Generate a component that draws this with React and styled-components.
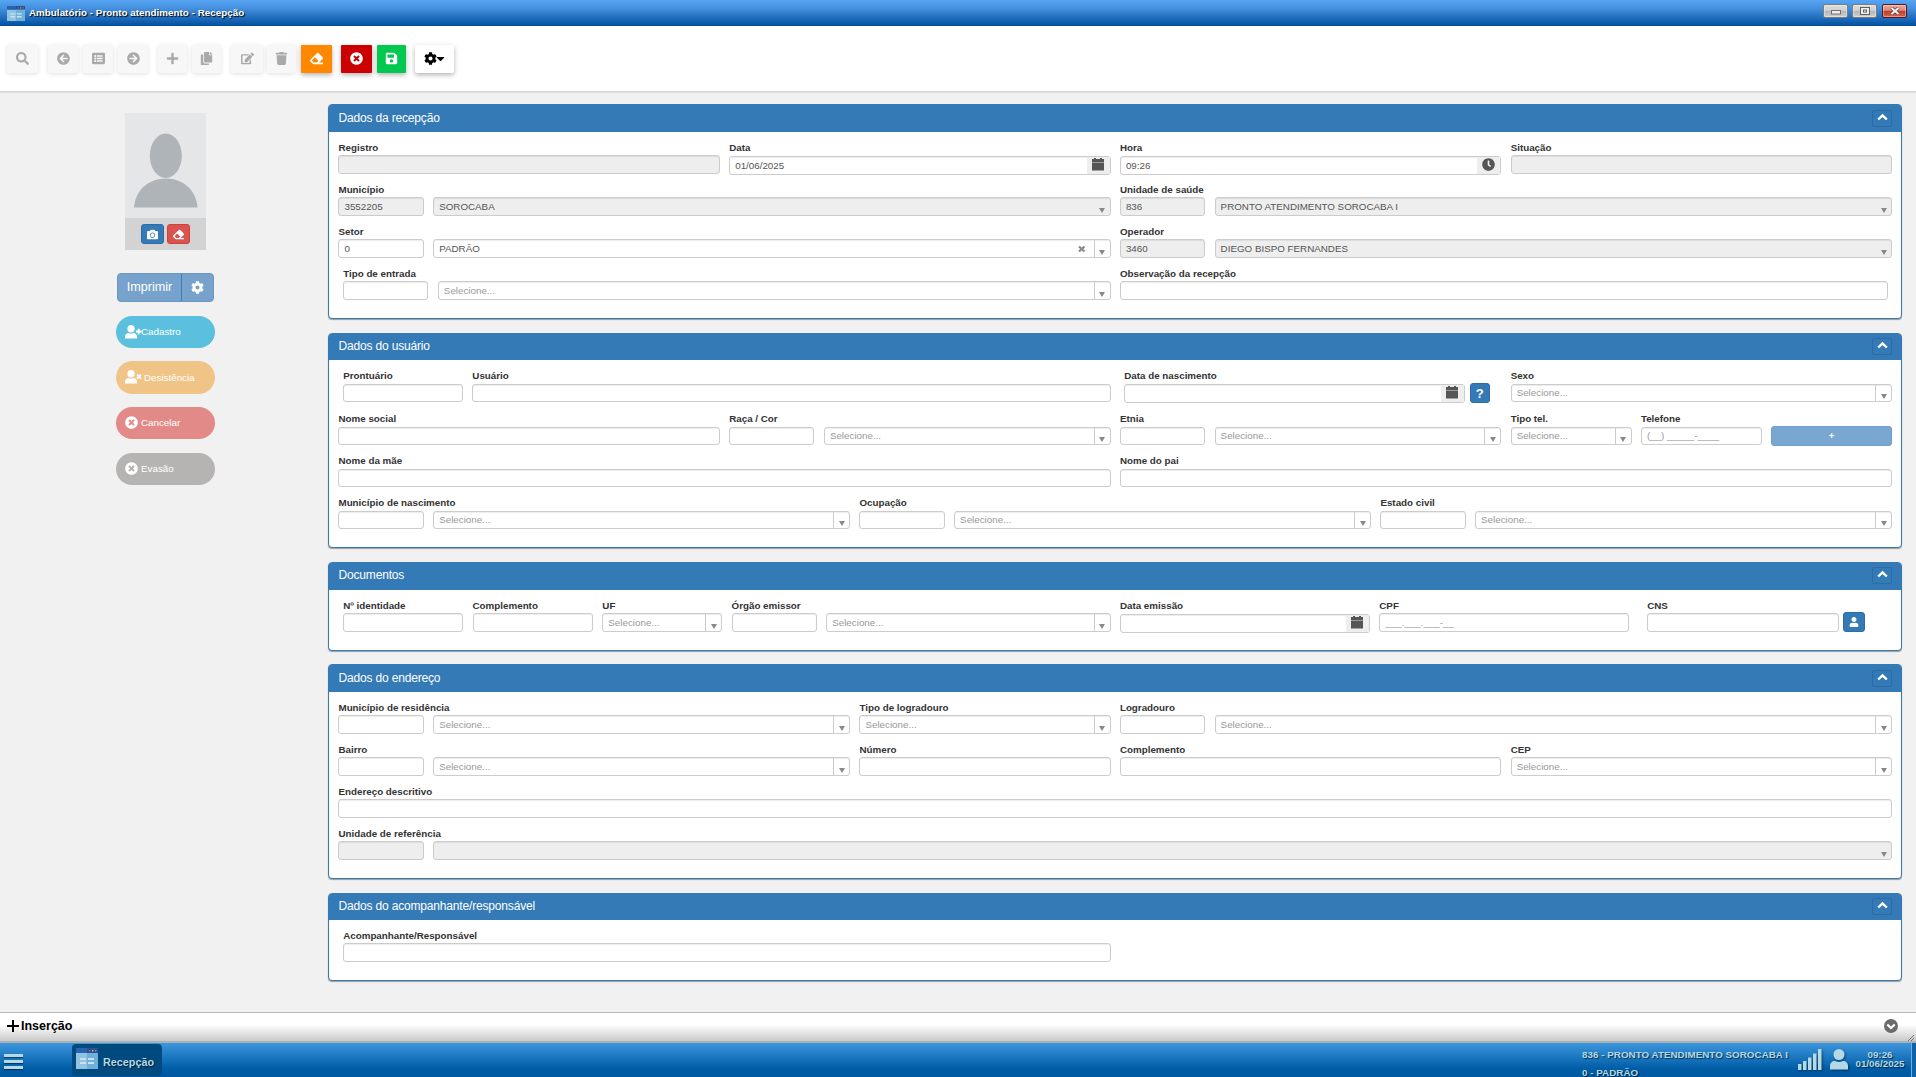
import React from 'react';
import styled, { createGlobalStyle, css } from 'styled-components';
import {
  FaArrowCircleLeft,
  FaArrowCircleRight,
  FaCamera,
  FaCaretDown,
  FaClock,
  FaCog,
  FaCopy,
  FaEdit,
  FaEraser,
  FaListAlt,
  FaPlus,
  FaSave,
  FaSearch,
  FaTimesCircle,
  FaTrash,
  FaUser,
} from 'react-icons/fa';

const GlobalStyle = createGlobalStyle`
  * {
    box-sizing: border-box;
  }

  body {
    margin: 0;
    overflow: hidden;
    font-family: 'Liberation Sans', Arial, sans-serif;
    font-size: 9.8px;
    color: #333333;
  }

  svg {
    display: block;
  }
`;

const Screen = styled.div`
  display: flex;
  flex-direction: column;
  width: 1916px;
  height: 1077px;
  background: #f1f1f1;
`;

/* window title */

const TitleBar = styled.header`
  display: flex;
  align-items: center;
  height: 26px;
  flex: none;
  padding: 0 9px 0 7px;
  background: linear-gradient(#57a5f3, #428ddc 35%, #004f9f);
`;

const WindowTitle = styled.h1`
  flex: 1;
  margin: -1px 0 0 4px;
  font-size: 9.8px;
  line-height: 26px;
  letter-spacing: 0.03px;
  color: #ffffff;
  text-shadow: 1px 1px 1px #000000;
`;

const WindowButton = styled.span`
  display: flex;
  align-items: center;
  justify-content: center;
  width: 25px;
  height: 14px;
  margin: -4px 0 0 4px;
  border: 1px solid ${({ $close }) => ($close ? '#5b1420' : '#7c7c7c')};
  border-radius: 2px;
  background: ${({ $close }) =>
    $close
      ? 'linear-gradient(#eba798, #dd8a78 45%, #b8402a 50%, #d4674f)'
      : 'linear-gradient(#dcdcdc, #d0d0d0 45%, #b6b6b6 50%, #cecece)'};
  box-shadow: inset 0 0 0 1px rgba(255, 255, 255, 0.35);

  &:last-child {
    margin-left: 5px;
  }
`;

/* toolbar */

const Toolbar = styled.nav`
  display: flex;
  height: 66px;
  flex: none;
  padding: 19px 7px;
  background: #ffffff;
  border-bottom: 1px solid #d4d4d4;
  box-shadow: 0 1px 1px rgba(0, 0, 0, 0.06);
`;

const toolColors = {
  off: ['#f7f7f7', '#a9a9a9'],
  orange: ['#ff8800', '#ffffff'],
  red: ['#cc0000', '#ffffff'],
  green: ['#00c851', '#ffffff'],
  light: ['#ffffff', '#000000'],
};

const ToolButton = styled.button`
  display: flex;
  align-items: center;
  justify-content: center;
  width: ${({ $w }) => $w}px;
  height: 28px;
  margin: 0 0 0 ${({ $gap }) => $gap || 0}px;
  padding: 0 0 2px;
  border: 0;
  border-radius: ${({ $tone }) => ($tone === 'off' || $tone === 'light' ? 2 : 1)}px;
  background: ${({ $tone }) => toolColors[$tone][0]};
  color: ${({ $tone }) => toolColors[$tone][1]};
  font-size: 13px;
  box-shadow: ${({ $tone }) =>
    $tone === 'off'
      ? '0 1px 4px rgba(0, 0, 0, 0.13)'
      : '0 2px 5px rgba(0, 0, 0, 0.3)'};
`;

const Caret = styled(FaCaretDown)`
  width: 9px;
  height: 13px;
  margin-left: -1px;
`;

/* side column */

const Main = styled.main`
  display: flex;
  flex: 1;
  min-height: 0;
`;

const Side = styled.aside`
  display: flex;
  flex-direction: column;
  align-items: center;
  width: 328px;
  padding: 21px 113px 0 116px;
`;

const Photo = styled.div`
  width: 81px;
  height: 137px;
  flex: none;
  margin-bottom: 23px;
  background: #e4e6e8;
`;

const PhotoActions = styled.div`
  display: flex;
  justify-content: center;
  gap: 3px;
  height: 32px;
  padding-top: 6px;
  background: #d3d3d3;
`;

const SmallButton = styled.button`
  display: flex;
  align-items: center;
  justify-content: center;
  flex: none;
  width: ${({ $w }) => $w || 23}px;
  height: 20px;
  margin: ${({ $raised }) => ($raised ? -1 : 0)}px 0 0;
  padding: 0;
  border: 1px solid ${({ $danger }) => ($danger ? '#d43f3a' : '#2e6da4')};
  border-radius: 3px;
  background: ${({ $danger }) => ($danger ? '#d9534f' : '#337ab7')};
  color: #ffffff;
  font-size: ${({ $font }) => $font || 11}px;
  font-weight: bold;
`;

const PrintGroup = styled.div`
  display: flex;
  width: 97px;
  height: 29px;
  flex: none;
  margin-bottom: 14px;
  border: 1px solid #6b97c3;
  border-radius: 4px;
  background: #76a2cc;
  color: #ffffff;
  font-size: 12.6px;
  line-height: 26px;
`;

const PrintLabel = styled.span`
  width: 64px;
  text-align: center;
  border-right: 1px solid #3f7ab2;
`;

const PrintConfig = styled.span`
  display: flex;
  flex: 1;
  align-items: center;
  justify-content: center;
`;

const Pill = styled.button`
  display: flex;
  align-items: center;
  gap: ${({ $gap }) => $gap}px;
  width: 99px;
  height: ${({ $h }) => $h || 32}px;
  flex: none;
  margin: 0 0 ${({ $after }) => $after || 14}px;
  padding: 0 0 1px 9px;
  border: 0;
  border-radius: 17px;
  background: ${({ $color }) => $color};
  color: #ffffff;
  font: 9.8px 'Liberation Sans', Arial, sans-serif;
`;

const PillIcon = styled.span`
  width: ${({ $w }) => $w}px;
  flex: none;
`;

/* panels */

const Content = styled.section`
  display: flex;
  flex-direction: column;
  width: 1574px;
  padding-top: 12px;
`;

const PanelBox = styled.section`
  flex: none;
  height: ${({ $height }) => $height}px;
  margin-bottom: ${({ $after }) => $after || 14}px;
  border: 1px solid #337ab7;
  border-radius: 4px;
  background: #ffffff;
  box-shadow: 0 1px 1px rgba(0, 0, 0, 0.35);
`;

const PanelHeader = styled.header`
  display: flex;
  justify-content: space-between;
  height: ${({ $short }) => ($short ? 26 : 27)}px;
  padding: 0 9px 0 9.5px;
  border-radius: 2px 2px 0 0;
  background: #337ab7;
  color: #ffffff;
`;

const PanelTitle = styled.h2`
  margin: 0;
  font-size: 12px;
  font-weight: normal;
  line-height: ${({ $low }) => ($low ? 26 : 24)}px;
  letter-spacing: -0.17px;
`;

const CollapseButton = styled.button`
  display: flex;
  justify-content: center;
  width: 20px;
  height: 17px;
  margin-top: ${({ $low }) => ($low ? 5 : 4)}px;
  padding: 2px 0 0;
  border: 1px solid #2e6da4;
  border-radius: 2px;
  background: transparent;
`;

const PanelBody = styled.div`
  --field: ${({ $dense }) => ($dense ? 18 : 19)}px;
  --label-line: ${({ $dense }) => ($dense ? 12 : 14)}px;
  padding: ${({ $dense }) => ($dense ? 10 : 9)}px 8.97px 0 9.48px;
`;

const Row = styled.div`
  display: grid;
  grid-template-columns: repeat(12, minmax(0, 1fr));
  column-gap: 9.33px;
  height: ${({ $height }) => $height || 42}px;
`;

const Cell = styled.div`
  display: flex;
  gap: 9.4px;
  grid-column: span ${({ $span }) => $span};
  padding: 0 ${({ $end }) => $end || 0}px 0 ${({ $start }) => $start || 0}px;
`;

const FieldBox = styled.div`
  min-width: 0;
  ${({ $w }) =>
    $w
      ? css`
          flex: 0 0 ${$w}px;
        `
      : css`
          flex: 1;
        `}
`;

const Label = styled.label`
  display: block;
  height: 14px;
  font-weight: bold;
  line-height: var(--label-line);
  white-space: nowrap;
`;

const Line = styled.div`
  display: flex;
  gap: ${({ $gap }) => $gap || 9.4}px;
`;

const Box = styled.div`
  display: flex;
  align-items: center;
  height: var(--field);
  min-width: 0;
  padding-left: 5px;
  border: 1px solid #cccccc;
  border-radius: 3px;
  background: ${({ $off }) => ($off ? '#eeeeee' : '#ffffff')};
  box-shadow: inset 0 1px 1px rgba(0, 0, 0, 0.075);
  color: ${({ $muted }) => ($muted ? '#999999' : '#555555')};
  white-space: nowrap;
  ${({ $w }) =>
    $w
      ? css`
          flex: 0 0 ${$w}px;
        `
      : css`
          flex: 1;
        `}
`;

const DateBox = styled(Box)`
  height: 19px;
  margin-top: ${({ $flush }) => ($flush ? 0 : 1)}px;
`;

const Value = styled.span`
  flex: 1;
  line-height: 16px;
`;

const Arrow = styled.span`
  display: flex;
  align-items: flex-end;
  justify-content: center;
  align-self: stretch;
  width: 16px;
  padding-bottom: 2px;
  border-left: 1px solid ${({ $off }) => ($off ? 'transparent' : '#cccccc')};
`;

const AddOn = styled.span`
  display: flex;
  align-items: flex-start;
  justify-content: center;
  align-self: stretch;
  width: 23px;
  padding-top: 1px;
  background: #eeeeee;
  color: #555555;
`;

const Clear = styled.span`
  width: 16px;
`;

const AddPhone = styled.button`
  flex: 1;
  height: 20px;
  margin-top: 13px;
  padding: 0 0 2px;
  border: 1px solid #6f9fcb;
  border-radius: 3px;
  background: #7aa7d1;
  color: #ffffff;
  font: bold 9.8px 'Liberation Sans', Arial, sans-serif;
`;

/* bottom bars */

const StatusBar = styled.footer`
  display: flex;
  align-items: center;
  height: 31px;
  flex: none;
  padding: 0 0 2px 7px;
  border-top: 1px solid #b5b5b5;
  border-bottom: 2px solid #a9b3b5;
  background: linear-gradient(#ffffff 42%, #c9c9c9);
  color: #000000;
  font-size: 12.5px;
  font-weight: bold;
`;

const StatusText = styled.span`
  flex: 1;
  margin-left: 2px;
`;

const Grip = styled.span`
  align-self: flex-end;
  margin: 0 2px -2px 10px;
`;

const TaskBar = styled.footer`
  display: flex;
  height: 34px;
  flex: none;
  padding-left: 4px;
  background: linear-gradient(#3d97de, #005da6 75%, #0058a2);
  color: #b4d9e6;
  font-weight: bold;
  text-shadow: 1px 1px 1px rgba(0, 0, 0, 0.6);
`;

const MenuLines = styled.span`
  display: flex;
  flex-direction: column;
  gap: 3px;
  width: 19px;
  margin: 11px 49px 0 0;

  i {
    height: 3px;
    background: #b4d9e6;
    box-shadow: 0 1px 1px rgba(0, 0, 0, 0.5);
  }
`;

const TaskButton = styled.div`
  display: flex;
  gap: 5px;
  width: 90px;
  height: 32px;
  margin-top: 1px;
  padding: 4px 0 0 4px;
  border-radius: 4px;
  background: #004a80;
  font-size: 10.8px;
  line-height: 28px;
`;

const UnitInfo = styled.div`
  width: 216px;
  margin-left: auto;
  padding-top: 3px;
  overflow: hidden;
  line-height: 17.6px;
  letter-spacing: 0.03px;
  white-space: nowrap;
`;

const TrayIcon = styled.span`
  width: ${({ $w }) => $w}px;
  padding-top: 6px;
  filter: drop-shadow(1px 1px 1px rgba(0, 0, 0, 0.4));
`;

const Clock = styled.div`
  width: 63px;
  padding: 7px 0 0 1px;
  text-align: center;
  line-height: 9px;
`;

const DesktopEdge = styled.div`
  width: 5px;
  border-left: 1px solid #6eb0e4;
  background: #0e62a8;
`;

const FormIcon = ({ size, height }) => (
  <svg width={size} height={height} viewBox="0 0 22 21" preserveAspectRatio="none">
    <rect width="22" height="21" fill="#6fb0d8" />
    <rect width="11" height="21" fill="#8fc3e0" />
    <rect width="22" height="5" fill="#2a4f96" />
    <rect width="11" height="5" fill="#2763ae" />
    <rect x="13" y="2" width="1.4" height="1.4" fill="#e0574f" />
    <rect x="16" y="2" width="1.4" height="1.4" fill="#e5c04a" />
    <rect x="19" y="2" width="1.4" height="1.4" fill="#5fae6a" />
    <path d="M4 11h6M4 15h6M12 11h6M12 15h6" stroke="#c5e3f3" strokeWidth="2" />
  </svg>
);

const CalendarIcon = () => (
  <svg width="12" height="13" viewBox="0 0 12 13">
    <path d="M2 0h2v2H2zM8 0h2v2H8zM0 1h12v3H0z" fill="#555555" />
    <path d="M0 4h12v1H0z" fill="#999999" />
    <path d="M0 5h12v7.500H0z" fill="#555555" />
  </svg>
);

const Triangle = () => (
  <svg width="6" height="5" viewBox="0 0 6 5">
    <path d="M0 0h6L3 5z" fill="#888888" />
  </svg>
);

const UserMark = ({ cross }) => (
  <svg width="18" height="14" viewBox="0 0 18 14" fill="#ffffff">
    <ellipse cx="6" cy="3.8" rx="3.6" ry="3.8" />
    <path d="M0 13.5v-2.2c0-1.8 1.5-3 3-3.4 2 .9 4 .9 6 0 1.5.4 3 1.6 3 3.4v2.2z" />
    {cross ? (
      <path d="M12 4.600l4 4M16 4.600l-4 4" stroke="#ffffff" strokeWidth="2" />
    ) : (
      <path d="M11 6.500h5.500M13.700 3.700v5.500" stroke="#ffffff" strokeWidth="1.800" />
    )}
  </svg>
);

const Input = ({ w, value, off, muted }) => (
  <Box $w={w} $off={off} $muted={muted}>
    <Value>{value}</Value>
  </Box>
);

const Select = ({ value = 'Selecione...', off, picked, clear }) => (
  <Box $off={off} $muted={!picked}>
    <Value>{value}</Value>
    {clear && (
      <Clear>
        <svg width="8" height="8" viewBox="0 0 8 8">
          <path d="M1 1.500l5.500 5M6.500 1.500L1 6.500" stroke="#888888" strokeWidth="2.200" />
        </svg>
      </Clear>
    )}
    <Arrow $off={off}>
      <Triangle />
    </Arrow>
  </Box>
);

const DateInput = ({ value, icon, flush }) => (
  <DateBox $flush={flush}>
    <Value>{value}</Value>
    <AddOn>{icon || <CalendarIcon />}</AddOn>
  </DateBox>
);

const Field = ({ label, w, gap, children }) => (
  <FieldBox $w={w}>
    <Label>{label}</Label>
    <Line $gap={gap}>{children}</Line>
  </FieldBox>
);

// short code input followed by its description select
const Coded = ({ label, code, ...select }) => (
  <Field label={label}>
    <Input w={85.3} value={code} off={select.off} />
    <Select {...select} />
  </Field>
);

const Panel = ({ title, height, after, dense, short, low, children }) => (
  <PanelBox $height={height} $after={after}>
    <PanelHeader $short={short}>
      <PanelTitle $low={low}>{title}</PanelTitle>
      <CollapseButton $low={low}>
        <svg width="11" height="8" viewBox="0 0 11 8">
          <path d="M1.200 6.500L5.500 2.400l4.300 4.100" fill="none" stroke="#ffffff" strokeWidth="2.400" />
        </svg>
      </CollapseButton>
    </PanelHeader>
    <PanelBody $dense={dense}>{children}</PanelBody>
  </PanelBox>
);

const tools = [
  { icon: <FaSearch />, w: 31 },
  { icon: <FaArrowCircleLeft />, w: 30, gap: 10 },
  { icon: <FaListAlt />, w: 30, gap: 5 },
  { icon: <FaArrowCircleRight />, w: 30, gap: 5 },
  { icon: <FaPlus />, w: 29, gap: 10 },
  { icon: <FaCopy />, w: 29, gap: 5 },
  { icon: <FaEdit />, w: 32, gap: 10 },
  { icon: <FaTrash />, w: 29, gap: 4 },
  { icon: <FaEraser />, w: 31, gap: 5, tone: 'orange' },
  { icon: <FaTimesCircle />, w: 31, gap: 9, tone: 'red' },
  { icon: <FaSave />, w: 29, gap: 5, tone: 'green' },
];

const App = () => {
  return (
    <Screen>
      <GlobalStyle />
      <TitleBar>
        <FormIcon size={18} height={15} />
        <WindowTitle>Ambulatório - Pronto atendimento - Recepção</WindowTitle>
        <WindowButton>
          <svg width="10" height="8" viewBox="0 0 10 8">
            <rect x=".5" y="3.5" width="9" height="3.5" fill="#eeeeee" stroke="#707070" />
          </svg>
        </WindowButton>
        <WindowButton>
          <svg width="10" height="8" viewBox="0 0 10 8">
            <rect x=".5" y=".5" width="9" height="7" fill="#eeeeee" stroke="#606060" />
            <rect x="3.5" y="3" width="3" height="2" fill="#ffffff" stroke="#606060" />
          </svg>
        </WindowButton>
        <WindowButton $close>
          <svg width="10" height="8" viewBox="0 0 10 8">
            <path d="M1.5 1l7 6M8.5 1l-7 6" stroke="#70424a" strokeWidth="3.6" />
            <path d="M1.5 1l7 6M8.5 1l-7 6" stroke="#f2f2f2" strokeWidth="2" />
          </svg>
        </WindowButton>
      </TitleBar>

      <Toolbar>
        {tools.map(({ icon, w, gap, tone = 'off' }, i) => (
          <ToolButton key={i} $w={w} $gap={gap} $tone={tone}>
            {icon}
          </ToolButton>
        ))}
        <ToolButton $w={39} $gap={9} $tone="light">
          <FaCog />
          <Caret />
        </ToolButton>
      </Toolbar>

      <Main>
        <Side>
          <Photo>
            <svg width="81" height="105" viewBox="0 0 81 105" fill="#afb4b8">
              <ellipse cx="40.8" cy="42.7" rx="16" ry="22.2" />
              <path d="M9 94.500C10 78 23 65.500 40.800 65.500S71.500 78 72.500 94.500z" />
            </svg>
            <PhotoActions>
              <SmallButton>
                <FaCamera />
              </SmallButton>
              <SmallButton $danger>
                <FaEraser />
              </SmallButton>
            </PhotoActions>
          </Photo>
          <PrintGroup>
            <PrintLabel>Imprimir</PrintLabel>
            <PrintConfig>
              <FaCog size={13} />
            </PrintConfig>
          </PrintGroup>
          <Pill $color="#5bc0de" $gap={0} $after={13}>
            <PillIcon $w={16}>
              <UserMark />
            </PillIcon>
            Cadastro
          </Pill>
          <Pill $color="#f0c486" $gap={2} $h={33} $after={13}>
            <PillIcon $w={17}>
              <UserMark cross />
            </PillIcon>
            Desistência
          </Pill>
          <Pill $color="#e28a87" $gap={3}>
            <FaTimesCircle size={13} />
            Cancelar
          </Pill>
          <Pill $color="#b5b4b3" $gap={3}>
            <FaTimesCircle size={13} />
            Evasão
          </Pill>
        </Side>

        <Content>
          <Panel title="Dados da recepção" height={215} low>
            <Row>
              <Cell $span={3}>
                <Field label="Registro">
                  <Input off />
                </Field>
              </Cell>
              <Cell $span={3}>
                <Field label="Data">
                  <DateInput value="01/06/2025" />
                </Field>
              </Cell>
              <Cell $span={3}>
                <Field label="Hora">
                  <DateInput value="09:26" icon={<FaClock size={13} />} />
                </Field>
              </Cell>
              <Cell $span={3}>
                <Field label="Situação">
                  <Input off />
                </Field>
              </Cell>
            </Row>
            <Row>
              <Cell $span={6}>
                <Coded label="Município" code="3552205" value="SOROCABA" picked off />
              </Cell>
              <Cell $span={6}>
                <Coded
                  label="Unidade de saúde"
                  code="836"
                  value="PRONTO ATENDIMENTO SOROCABA I"
                  picked
                  off
                />
              </Cell>
            </Row>
            <Row>
              <Cell $span={6}>
                <Coded label="Setor" code="0" value="PADRÃO" picked clear />
              </Cell>
              <Cell $span={6}>
                <Coded label="Operador" code="3460" value="DIEGO BISPO FERNANDES" picked off />
              </Cell>
            </Row>
            <Row>
              <Cell $span={6} $start={4.7}>
                <Coded label="Tipo de entrada" />
              </Cell>
              <Cell $span={6} $end={4}>
                <Field label="Observação da recepção">
                  <Input />
                </Field>
              </Cell>
            </Row>
          </Panel>

          <Panel title="Dados do usuário" height={215} dense short>
            <Row $height={43}>
              <Cell $span={6} $start={4.7}>
                <Field label="Prontuário" w={119.8}>
                  <Input />
                </Field>
                <Field label="Usuário">
                  <Input />
                </Field>
              </Cell>
              <Cell $span={3} $start={4.3} $end={11.5}>
                <Field label="Data de nascimento" gap={5}>
                  <DateInput flush />
                  <SmallButton $w={20} $font={13} $raised>
                    ?
                  </SmallButton>
                </Field>
              </Cell>
              <Cell $span={3}>
                <Field label="Sexo">
                  <Select />
                </Field>
              </Cell>
            </Row>
            <Row>
              <Cell $span={3}>
                <Field label="Nome social">
                  <Input />
                </Field>
              </Cell>
              <Cell $span={3}>
                <Coded label="Raça / Cor" />
              </Cell>
              <Cell $span={3}>
                <Coded label="Etnia" />
              </Cell>
              <Cell $span={1}>
                <Field label="Tipo tel.">
                  <Select />
                </Field>
              </Cell>
              <Cell $span={1}>
                <Field label="Telefone">
                  <Input value="(__) _____-____" muted />
                </Field>
              </Cell>
              <Cell $span={1}>
                <AddPhone>+</AddPhone>
              </Cell>
            </Row>
            <Row>
              <Cell $span={6}>
                <Field label="Nome da mãe">
                  <Input />
                </Field>
              </Cell>
              <Cell $span={6}>
                <Field label="Nome do pai">
                  <Input />
                </Field>
              </Cell>
            </Row>
            <Row>
              <Cell $span={4}>
                <Coded label="Município de nascimento" />
              </Cell>
              <Cell $span={4}>
                <Coded label="Ocupação" />
              </Cell>
              <Cell $span={4}>
                <Coded label="Estado civil" />
              </Cell>
            </Row>
          </Panel>

          <Panel title="Documentos" height={89} after={13}>
            <Row>
              <Cell $span={6} $start={4.7}>
                <Field label="Nº identidade" w={120}>
                  <Input />
                </Field>
                <Field label="Complemento" w={120.4}>
                  <Input />
                </Field>
                <Field label="UF" w={119.8}>
                  <Select />
                </Field>
                <Coded label="Órgão emissor" />
              </Cell>
              <Cell $span={6} $end={26.7}>
                <Field label="Data emissão" w={250}>
                  <DateInput />
                </Field>
                <Field label="CPF" w={250}>
                  <Input value="___.___.___-__" muted />
                </Field>
                <Cell $start={8.5}>
                  <Field label="CNS" w={218} gap={4}>
                    <Input />
                    <SmallButton $w={22} $raised>
                      <FaUser size={10} />
                    </SmallButton>
                  </Field>
                </Cell>
              </Cell>
            </Row>
          </Panel>

          <Panel title="Dados do endereço" height={215} low>
            <Row>
              <Cell $span={4}>
                <Coded label="Município de residência" />
              </Cell>
              <Cell $span={2}>
                <Field label="Tipo de logradouro">
                  <Select />
                </Field>
              </Cell>
              <Cell $span={6}>
                <Coded label="Logradouro" />
              </Cell>
            </Row>
            <Row>
              <Cell $span={4}>
                <Coded label="Bairro" />
              </Cell>
              <Cell $span={2}>
                <Field label="Número">
                  <Input />
                </Field>
              </Cell>
              <Cell $span={3}>
                <Field label="Complemento">
                  <Input />
                </Field>
              </Cell>
              <Cell $span={3}>
                <Field label="CEP">
                  <Select />
                </Field>
              </Cell>
            </Row>
            <Row>
              <Cell $span={12}>
                <Field label="Endereço descritivo">
                  <Input />
                </Field>
              </Cell>
            </Row>
            <Row>
              <Cell $span={12}>
                <Coded label="Unidade de referência" value="" off />
              </Cell>
            </Row>
          </Panel>

          <Panel title="Dados do acompanhante/responsável" height={88} short>
            <Row>
              <Cell $span={6} $start={4.7}>
                <Field label="Acompanhante/Responsável">
                  <Input />
                </Field>
              </Cell>
            </Row>
          </Panel>
        </Content>
      </Main>

      <StatusBar>
        <svg width="12" height="12" viewBox="0 0 12 12">
          <path d="M0 6h12M6 0v12" stroke="#000000" strokeWidth="2" />
        </svg>
        <StatusText>Inserção</StatusText>
        <svg width="14" height="14" viewBox="0 0 14 14">
          <circle cx="7" cy="7" r="7" fill="#6b6b6b" />
          <path d="M3.300 5.500L7 9l3.700-3.500" fill="none" stroke="#ffffff" strokeWidth="2.200" />
        </svg>
        <Grip>
          <svg width="6" height="6" viewBox="0 0 6 6">
            <path d="M0 6l6-6M3 6l3-3" stroke="#777777" />
          </svg>
        </Grip>
      </StatusBar>

      <TaskBar>
        <MenuLines>
          <i />
          <i />
          <i />
        </MenuLines>
        <TaskButton>
          <FormIcon size={22} height={21} />
          Recepção
        </TaskButton>
        <UnitInfo>
          <div>836 - PRONTO ATENDIMENTO SOROCABA I</div>
          <div>0 - PADRÃO</div>
        </UnitInfo>
        <TrayIcon $w={32}>
          <svg width="24" height="21" viewBox="0 0 24 21" fill="#b4d9e6">
            <path d="M0 15h3.500v6H0zM5 12h3.500v9H5zM10 8.500h3.500V21H10zM15 4.500h3.500V21H15zM20 0h3.500v21H20z" />
          </svg>
        </TrayIcon>
        <TrayIcon $w={18}>
          <svg width="18" height="21" viewBox="0 0 18 21" fill="#b4d9e6">
            <circle cx="9" cy="5.5" r="5.5" />
            <path d="M0 20.500v-3.500c0-3 2-5 5-5 2.500 1.200 5.500 1.200 8 0 3 0 5 2 5 5v3.500z" />
          </svg>
        </TrayIcon>
        <Clock>
          09:26
          <br />
          01/06/2025
        </Clock>
        <DesktopEdge />
      </TaskBar>
    </Screen>
  );
};

export default App;
